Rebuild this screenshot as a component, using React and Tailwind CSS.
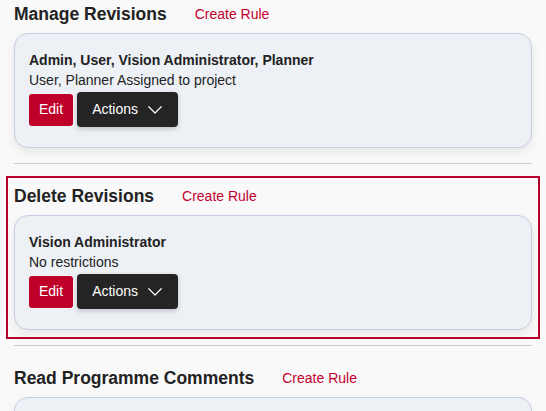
import { useState } from 'react'

const sections = [
	{
		title: 'Manage Revisions',
		rules: [{ roles: 'Admin, User, Vision Administrator, Planner', detail: 'User, Planner Assigned to project' }],
	},
	{
		title: 'Delete Revisions',
		rules: [{ roles: 'Vision Administrator', detail: 'No restrictions' }],
	},
	{
		title: 'Read Programme Comments',
		rules: [{ roles: 'Admin, User, Vision Administrator', detail: 'No restrictions' }],
	},
]

function ChevronDown() {
	return (
		<svg width="14" height="8" viewBox="0 0 14 8" fill="none" className="shrink-0">
			<polyline points="0.75,0.75 7,7 13.25,0.75" stroke="white" strokeWidth="1.2" strokeLinecap="round" strokeLinejoin="round" />
		</svg>
	)
}

function RuleCard({ rule }) {
	return (
		<div className="rounded-[14px] border border-[#c6cee2] bg-[#edf0f5] px-[14px] pt-[16px] pb-[20px] shadow-[0_4px_10px_rgba(0,0,0,0.08)]">
			<h3 className="text-[14px] font-bold leading-5 text-[#222]">{rule.roles}</h3>
			<p className="text-[14px] leading-5 text-[#222]">{rule.detail}</p>
			<div className="mt-[2px] flex items-center gap-1">
				<button className="h-[32px] rounded-[3px] bg-[#bf0029] px-[10px] text-[14px] text-white">Edit</button>
				<button className="flex h-[35px] items-center gap-[10px] rounded-[4px] bg-[#242424] pl-[15px] pr-[16px] text-[14px] text-white shadow-[0_2px_5px_rgba(0,0,0,0.2)]">
					Actions
					<ChevronDown />
				</button>
			</div>
		</div>
	)
}

export default function App() {
	const [selected] = useState(1)

	return (
		<div className="min-h-screen bg-[#f9f9f9] px-[6px] font-[family-name:'Liberation_Sans',Arial,sans-serif]">
			<div className="-mt-[6px]">
				{sections.map((section, i) => (
					<div key={section.title}>
						{/* permission block */}
						<section
							className={
								i === selected
									? 'border-2 border-[#b5002a] px-[6px] pt-[4px] pb-[7px]'
									: 'border-2 border-transparent px-[6px] pt-[4px] pb-[7px]'
							}
						>
							<div className="flex h-[28px] items-center gap-7">
								<h2 className="text-[17.5px] font-bold leading-[28px] text-[#222]">{section.title}</h2>
								<a className="cursor-pointer text-[14px] leading-5 text-[#c4002f]">Create Rule</a>
							</div>
							<div className="mt-[5px] flex flex-col gap-3">
								{section.rules.map((rule, j) => (
									<RuleCard key={j} rule={rule} />
								))}
							</div>
						</section>
						{i < sections.length - 1 && <div className="mx-[8px] mt-[6px] mb-[12px] h-px bg-[#cbcbcb]"></div>}
					</div>
				))}
			</div>
		</div>
	)
}
